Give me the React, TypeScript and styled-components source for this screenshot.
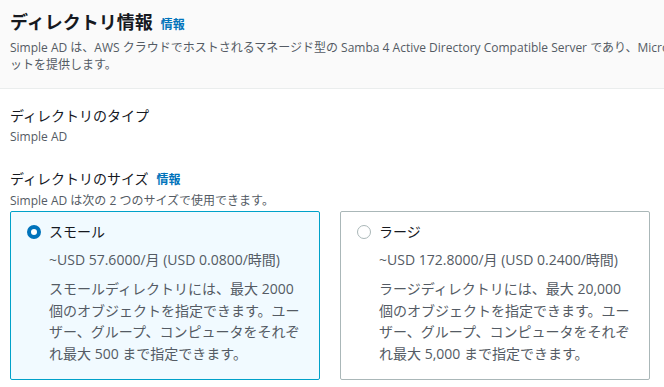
import React from "react";
import styled, { createGlobalStyle, css } from "styled-components";

const GlobalStyle = createGlobalStyle`
  html, body {
    margin: 0;
    padding: 0;
    background: #ffffff;
    overflow: hidden;
  }
  body {
    font-family: "Open Sans", "Noto Sans CJK JP", sans-serif;
    color: #16191f;
  }
`;

const Page = styled.div`
  width: 664px;
  overflow: hidden;
`;

const Header = styled.header`
  background: #fafafa;
  border-bottom: 1px solid #eaeded;
  padding: 8px 10px 15px;
`;

const Title = styled.h1`
  margin: 0;
  font-size: 18px;
  line-height: 28px;
  font-weight: 700;
  display: flex;
  align-items: baseline;
  gap: 8px;
`;

const InfoLink = styled.a`
  font-size: 12px;
  font-weight: 700;
  color: #0073bb;
  text-decoration: none;
`;

const HeaderText = styled.p`
  margin: 0;
  font-size: 12px;
  line-height: 17px;
  color: #545b64;
  white-space: nowrap;
`;

const Body = styled.section`
  padding: 17px 10px 0;
  display: flex;
  flex-direction: column;
  gap: 23px;
`;

const Field = styled.div`
  display: flex;
  flex-direction: column;
`;

const Label = styled.div`
  font-size: 14px;
  line-height: 20px;
  display: flex;
  align-items: baseline;
  gap: 8px;
`;

const Hint = styled.div`
  margin-top: 2px;
  font-size: 12px;
  line-height: 18px;
  color: #545b64;
`;

const Tiles = styled.div`
  margin-top: 1px;
  display: grid;
  grid-template-columns: 310px 310px;
  gap: 20px;
`;

const Tile = styled.label<{ $selected?: boolean }>`
  box-sizing: border-box;
  height: 169px;
  padding: 9px 16px 13px;
  border: 1px solid #aab7b8;
  border-radius: 2px;
  background: #ffffff;
  display: grid;
  grid-template-columns: 14px 1fr;
  column-gap: 8px;
  ${(p) =>
    p.$selected &&
    css`
      border-color: #00a1c9;
      background: #f1faff;
    `}
`;

const Radio = styled.span<{ $checked?: boolean }>`
  box-sizing: border-box;
  width: 14px;
  height: 14px;
  margin-top: 4px;
  border-radius: 50%;
  border: 1.5px solid #aab7b8;
  background: #ffffff;
  ${(p) =>
    p.$checked &&
    css`
      border: 4px solid #0073bb;
    `}
`;

const TileContent = styled.div`
  display: flex;
  flex-direction: column;
`;

const TileTitle = styled.div`
  font-size: 14px;
  line-height: 22px;
  color: #16191f;
`;

const Price = styled.div`
  margin-top: 6px;
  font-size: 14px;
  line-height: 22px;
  color: #545b64;
`;

const TileText = styled.div`
  margin-top: 7px;
  font-size: 14px;
  line-height: 21.7px;
  color: #545b64;
`;

const sizes = [
  {
    name: "スモール",
    price: "~USD 57.6000/月 (USD 0.0800/時間)",
    text: "スモールディレクトリには、最大 2000 個のオブジェクトを指定できます。ユーザー、グループ、コンピュータをそれぞれ最大 500 まで指定できます。",
    selected: true,
  },
  {
    name: "ラージ",
    price: "~USD 172.8000/月 (USD 0.2400/時間)",
    text: "ラージディレクトリには、最大 20,000 個のオブジェクトを指定できます。ユーザー、グループ、コンピュータをそれぞれ最大 5,000 まで指定できます。",
    selected: false,
  },
];

export default function App() {
  return (
    <Page>
      <GlobalStyle />
      <Header>
        <Title>
          ディレクトリ情報 <InfoLink href="#">情報</InfoLink>
        </Title>
        <HeaderText>
          Simple AD は、AWS クラウドでホストされるマネージド型の Samba 4 Active
          Directory Compatible Server であり、Microsoft Active Directory
          の機能のサブセ
        </HeaderText>
        <HeaderText>ットを提供します。</HeaderText>
      </Header>
      <Body>
        <Field>
          <Label>ディレクトリのタイプ</Label>
          <Hint>Simple AD</Hint>
        </Field>
        <Field>
          <Label>
            ディレクトリのサイズ <InfoLink href="#">情報</InfoLink>
          </Label>
          <Hint>Simple AD は次の 2 つのサイズで使用できます。</Hint>
          <Tiles>
            {sizes.map((s) => (
              <Tile key={s.name} $selected={s.selected}>
                <Radio $checked={s.selected} />
                <TileContent>
                  <TileTitle>{s.name}</TileTitle>
                  <Price>{s.price}</Price>
                  <TileText>{s.text}</TileText>
                </TileContent>
              </Tile>
            ))}
          </Tiles>
        </Field>
      </Body>
    </Page>
  );
}
